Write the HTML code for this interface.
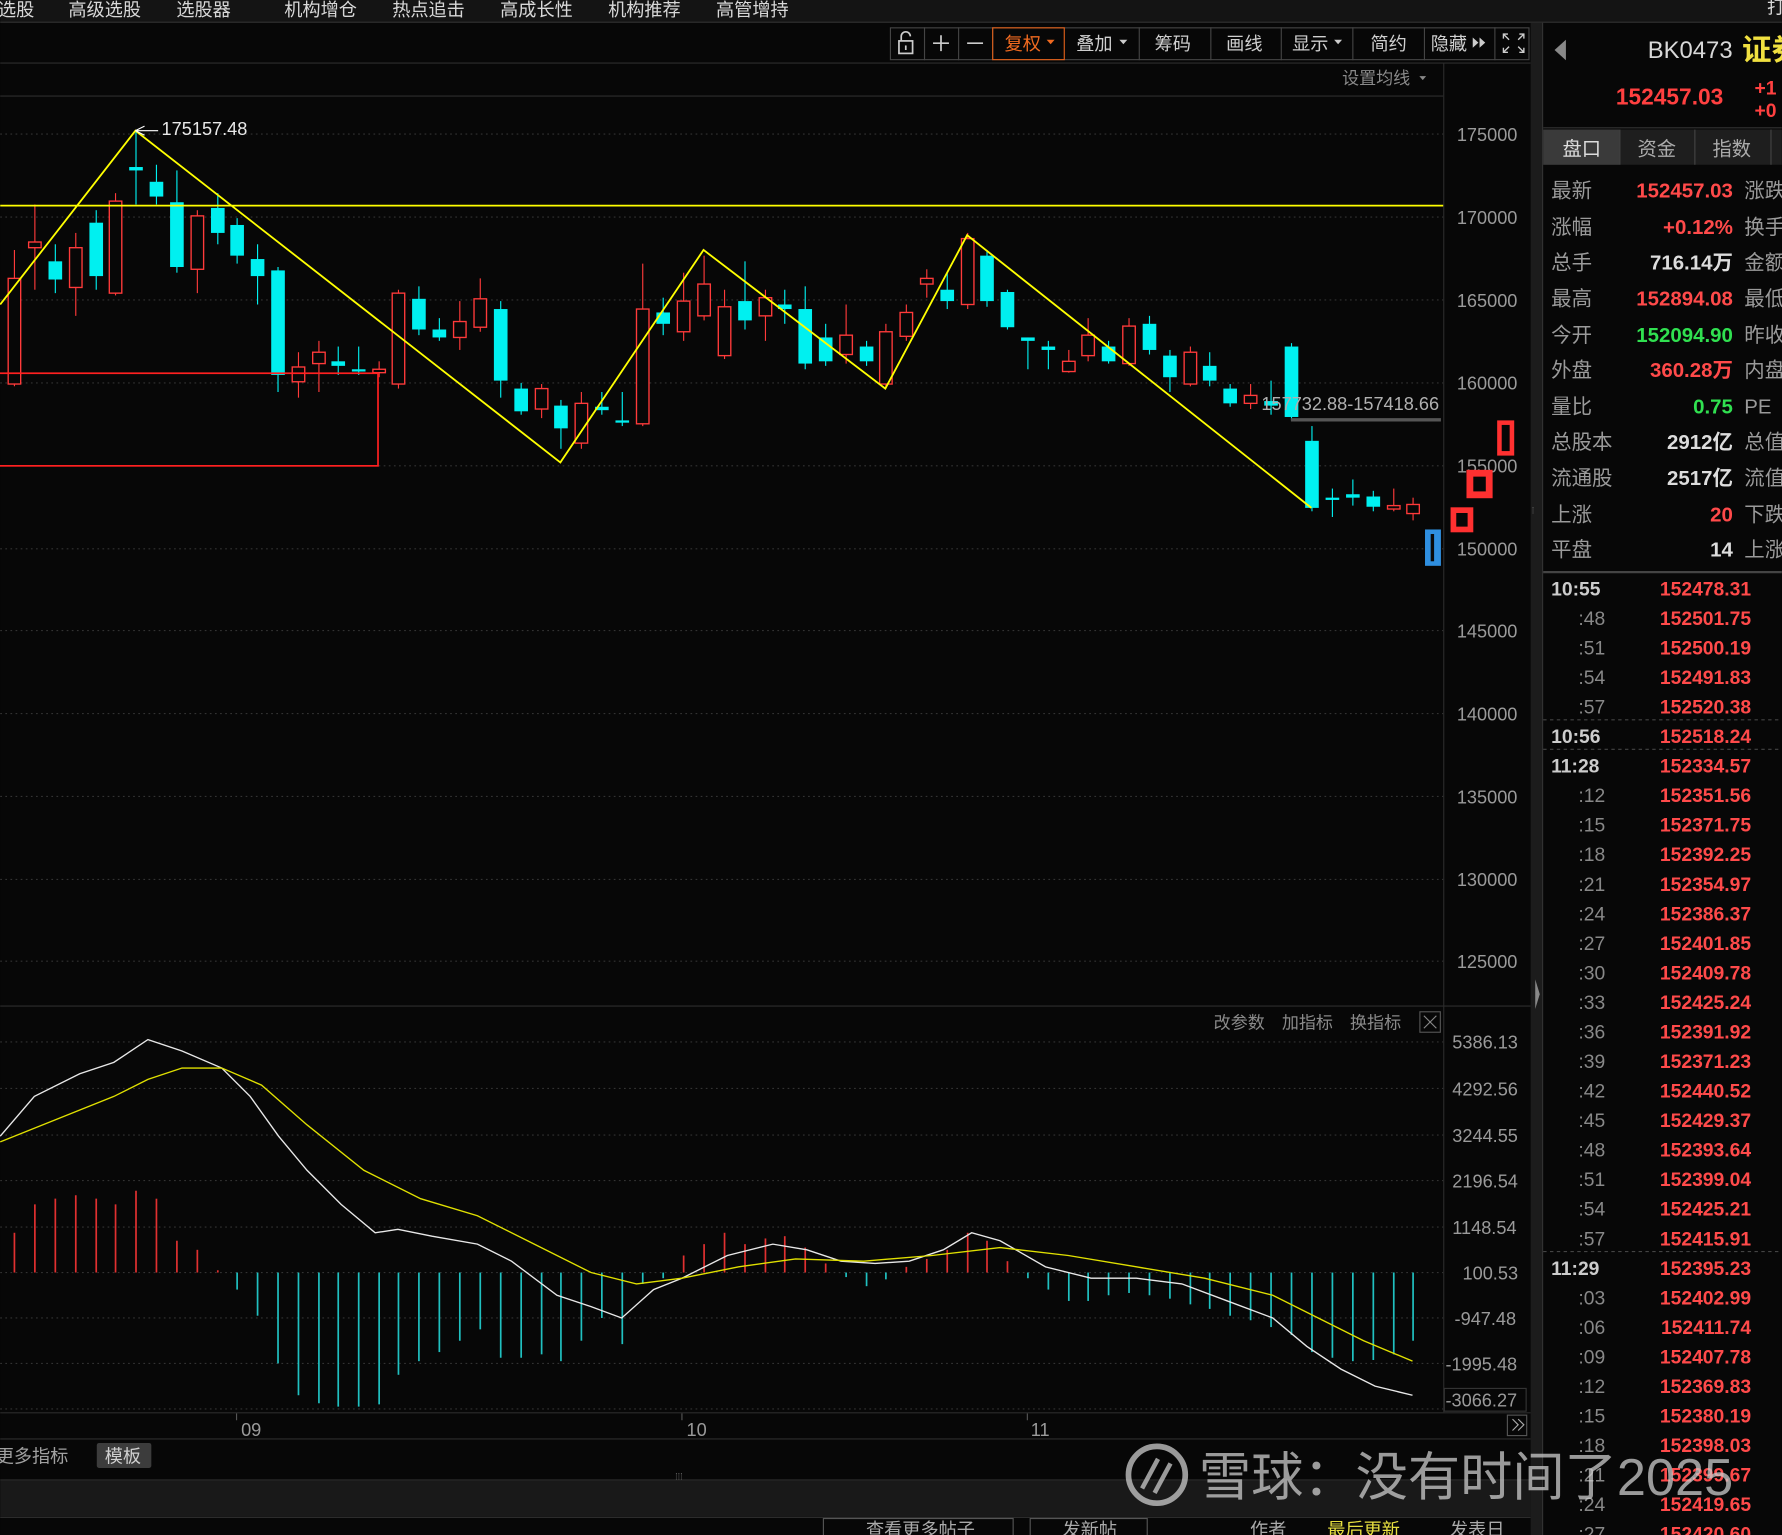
<!DOCTYPE html>
<html><head><meta charset="utf-8"><style>
html,body{margin:0;padding:0;background:#070707;overflow:hidden}
svg{display:block}
text{font-family:"Liberation Sans","Noto Sans CJK SC",sans-serif}
</style></head><body>
<svg id="s" width="1782" height="1535" viewBox="0 0 1568 1351" xmlns="http://www.w3.org/2000/svg">
<rect width="1568" height="1351" fill="#070707"/>
<!-- top menu -->
<rect width="1568" height="19" fill="#141414"/>
<line x1="0" y1="19.5" x2="1568" y2="19.5" stroke="#333"/>
<g fill="#d8d8d8" font-size="16">
<text x="-2" y="14">选股</text><text x="60" y="14">高级选股</text><text x="155" y="14">选股器</text>
<text x="250" y="14">机构增仓</text><text x="345" y="14">热点追击</text><text x="440" y="14">高成长性</text>
<text x="535" y="14">机构推荐</text><text x="630" y="14">高管增持</text><text x="1555" y="12">打</text>
</g>
<!-- chart grid -->
<g stroke="#333" stroke-dasharray="1.5 3" stroke-width="1">
<line x1="0" y1="118" x2="1270" y2="118"/><line x1="0" y1="191" x2="1270" y2="191"/><line x1="0" y1="264" x2="1270" y2="264"/>
<line x1="0" y1="337" x2="1270" y2="337"/><line x1="0" y1="410" x2="1270" y2="410"/><line x1="0" y1="483" x2="1270" y2="483"/>
<line x1="0" y1="555" x2="1270" y2="555"/><line x1="0" y1="628" x2="1270" y2="628"/><line x1="0" y1="701" x2="1270" y2="701"/>
<line x1="0" y1="774" x2="1270" y2="774"/><line x1="0" y1="846" x2="1270" y2="846"/>
<line x1="0" y1="917" x2="1270" y2="917"/><line x1="0" y1="958" x2="1270" y2="958"/><line x1="0" y1="999" x2="1270" y2="999"/>
<line x1="0" y1="1039" x2="1270" y2="1039"/><line x1="0" y1="1080" x2="1270" y2="1080"/><line x1="0" y1="1120" x2="1270" y2="1120"/>
<line x1="0" y1="1160" x2="1270" y2="1160"/><line x1="0" y1="1200" x2="1270" y2="1200"/><line x1="0" y1="1240" x2="1270" y2="1240"/>
</g>
<g stroke="#2c2c2c"><line x1="0" y1="55.5" x2="1347" y2="55.5"/><line x1="0" y1="84.5" x2="1270" y2="84.5"/>
<line x1="1270.5" y1="55" x2="1270.5" y2="1243"/><line x1="0" y1="885.5" x2="1347" y2="885.5"/>
<line x1="0" y1="1243.5" x2="1347" y2="1243.5"/><line x1="0" y1="1266.5" x2="1347" y2="1266.5"/>
<line x1="0" y1="1302.5" x2="1347" y2="1302.5"/><line x1="0" y1="1335.5" x2="1347" y2="1335.5"/></g>
<!-- toolbar -->
<g stroke="#444" fill="none"><rect x="783.5" y="24.5" width="562" height="28"/>
<line x1="813.5" y1="24" x2="813.5" y2="53"/><line x1="843.5" y1="24" x2="843.5" y2="53"/><line x1="873.5" y1="24" x2="873.5" y2="53"/>
<line x1="1002.5" y1="24" x2="1002.5" y2="53"/><line x1="1065.5" y1="24" x2="1065.5" y2="53"/><line x1="1127.5" y1="24" x2="1127.5" y2="53"/>
<line x1="1190.5" y1="24" x2="1190.5" y2="53"/><line x1="1253.5" y1="24" x2="1253.5" y2="53"/><line x1="1315.5" y1="24" x2="1315.5" y2="53"/></g>
<rect x="873.5" y="24.5" width="63" height="28" fill="none" stroke="#e0601a"/>
<g stroke="#ccc" stroke-width="1.5" fill="none"><rect x="791" y="36" width="12" height="11"/><path d="M793 36v-4a4 4 0 0 1 8 0"/><line x1="797" y1="40" x2="797" y2="44"/>
<path d="M828 31v14M821 38h14M851 38h14"/>
<path d="M1323 34v-4h4M1337 30h4v4M1323 42v4h4M1341 42v4h-4M1323 30l5 5M1341 30l-5 5M1323 46l5-5M1341 46l-5-5" stroke-width="1.2"/></g>
<g font-size="16" fill="#cfcfcf"><text x="884" y="44" fill="#f06a20">复权</text><text x="947" y="44">叠加</text><text x="1016" y="44">筹码</text>
<text x="1079" y="44">画线</text><text x="1137" y="44">显示</text><text x="1206" y="44">简约</text><text x="1259" y="44">隐藏</text>
<text x="1181" y="74" fill="#8a8a8a" font-size="15">设置均线</text></g>
<g fill="#ccc"><path d="M921 35h7l-3.5 4z" fill="#f06a20"/><path d="M985 35h7l-3.5 4z"/><path d="M1174 35h7l-3.5 4z"/><path d="M1249 67h6l-3 3.5z" fill="#888"/>
<path d="M1296 33v9l5-4.5zM1302 33v9l5-4.5z"/></g>
<!-- price axis -->
<g font-size="16" fill="#9a9a9a"><text x="1282" y="124">175000</text><text x="1282" y="197">170000</text><text x="1282" y="270">165000</text>
<text x="1282" y="343">160000</text><text x="1282" y="416">155000</text><text x="1282" y="489">150000</text><text x="1282" y="561">145000</text>
<text x="1282" y="634">140000</text><text x="1282" y="707">135000</text><text x="1282" y="780">130000</text><text x="1282" y="852">125000</text>
<text x="1278" y="923">5386.13</text><text x="1278" y="964">4292.56</text><text x="1278" y="1005">3244.55</text><text x="1278" y="1045">2196.54</text>
<text x="1278" y="1086">1148.54</text><text x="1287" y="1126">100.53</text><text x="1280" y="1166">-947.48</text><text x="1272" y="1206">-1995.48</text><text x="1272" y="1238">-3066.27</text></g>
<rect x="1271" y="1222" width="72" height="20" fill="none" stroke="#333"/>
<g id="cd"></g>
<!-- overlays -->
<line x1="0" y1="181" x2="1270" y2="181" stroke="#ffff00" stroke-width="1.5"/>
<rect x="-2" y="328.5" width="334.5" height="81.5" fill="none" stroke="#ff2020" stroke-width="1.5"/>
<polyline points="0,268 119,115 493,407 619,220 779,342 851,207 1154,447" fill="none" stroke="#ffff00" stroke-width="1.6"/>
<path d="M119 115l8-4M119 115l8 4M119 115h20" stroke="#fff" stroke-width="1"/>
<text x="142" y="119" font-size="16" fill="#e8e8e8">175157.48</text>
<line x1="1136" y1="369.5" x2="1268" y2="369.5" stroke="#555" stroke-width="3"/>
<text x="1110" y="361" font-size="16" fill="#b0b0b0">157732.88-157418.66</text>
<rect x="1319.5" y="372" width="11" height="27" fill="none" stroke="#ff3030" stroke-width="4"/>
<rect x="1293.5" y="416.5" width="17" height="19" fill="none" stroke="#ff3030" stroke-width="6"/>
<rect x="1279" y="449" width="15" height="17" fill="none" stroke="#ff3030" stroke-width="5"/>
<rect x="1254" y="466" width="14" height="32" fill="#2f8fe0"/><rect x="1259" y="470" width="3" height="24" fill="#0a0a0a"/>
<!-- MACD -->
<g font-size="15" fill="#8a8a8a"><text x="1068" y="905">改参数</text><text x="1128" y="905">加指标</text><text x="1188" y="905">换指标</text></g>
<rect x="1249.5" y="890.5" width="18" height="18" fill="none" stroke="#555"/><path d="M1253 894l11 11M1264 894l-11 11" stroke="#888"/>
<g id="mb"></g>
<polyline fill="none" stroke="#e8e8e8" stroke-width="1.2" points="0,1000 30,965 70,945 100,935 130,915 160,925 195,940 220,965 245,1000 270,1030 300,1060 330,1085 350,1082 380,1088 420,1095 450,1110 490,1140 520,1150 547,1160 575,1135 600,1125 640,1105 680,1095 710,1100 740,1110 770,1112 800,1110 830,1100 855,1085 880,1092 920,1115 960,1125 1000,1125 1040,1130 1080,1145 1120,1160 1150,1185 1180,1205 1210,1220 1243,1228"/>
<polyline fill="none" stroke="#e0e000" stroke-width="1.2" points="0,1005 50,985 100,965 130,950 160,940 195,940 230,955 270,990 320,1030 370,1055 420,1070 470,1095 520,1120 560,1130 600,1125 650,1115 700,1108 760,1110 820,1105 880,1098 940,1105 1000,1115 1060,1125 1120,1140 1160,1160 1200,1180 1243,1198"/>
<!-- x axis -->
<g stroke="#555"><line x1="208" y1="1244" x2="208" y2="1250"/><line x1="600" y1="1244" x2="600" y2="1250"/><line x1="904" y1="1244" x2="904" y2="1250"/></g>
<g font-size="16" fill="#9a9a9a"><text x="212" y="1264">09</text><text x="604" y="1264">10</text><text x="907" y="1264">11</text></g>
<rect x="1326.5" y="1245.5" width="17" height="18" fill="none" stroke="#555"/><path d="M1331 1249l5 5-5 5M1336 1249l5 5-5 5" stroke="#aaa" fill="none"/>
<text x="-4" y="1287" font-size="16" fill="#a0a0a0">更多指标</text>
<rect x="85" y="1270" width="48" height="22" fill="#3c3c3c" rx="2"/><text x="92" y="1287" font-size="16" fill="#d0d0d0">模板</text>
<rect x="0" y="1303" width="1347" height="32" fill="#191919"/>
<text x="594" y="1302" font-size="8" fill="#666">⁞⁞⁞</text>
<g stroke="#555" fill="none"><rect x="724.5" y="1336.5" width="167" height="20"/><rect x="906.5" y="1336.5" width="103" height="20"/></g>
<g font-size="16" fill="#aaa"><text x="762" y="1352">查看更多帖子</text><text x="935" y="1352">发新帖</text><text x="1100" y="1352">作者</text>
<text x="1168" y="1352" fill="#e8e040">最后更新</text><text x="1276" y="1352">发表日</text></g>
<!-- divider -->
<rect x="1347" y="20" width="10" height="1331" fill="#1c1c1c"/><line x1="1357.5" y1="20" x2="1357.5" y2="1351" stroke="#333"/>
<path d="M1351 862l4 13-4 13z" fill="#888"/><text x="1348" y="452" font-size="8" fill="#666">⁞</text>
<!-- right panel -->
<path d="M1378 35v18l-10-9z" fill="#888"/>
<text x="1450" y="51" font-size="21" fill="#d8d8d8">BK0473</text>
<text x="1533" y="53" font-size="26" font-weight="bold" fill="#f0e040">证券</text>
<text x="1422" y="92" font-size="20" font-weight="bold" fill="#ff4040">152457.03</text>
<text x="1544" y="83" font-size="17" font-weight="bold" fill="#ff4040">+1</text><text x="1544" y="103" font-size="17" font-weight="bold" fill="#ff4040">+0</text>
<line x1="1358" y1="112.5" x2="1568" y2="112.5" stroke="#333"/>
<rect x="1358" y="114" width="210" height="31" fill="#1e1e1e"/><rect x="1358" y="114" width="67" height="31" fill="#3a3a3a"/>
<g stroke="#444"><line x1="1425.5" y1="114" x2="1425.5" y2="145"/><line x1="1491.5" y1="114" x2="1491.5" y2="145"/><line x1="1558.5" y1="114" x2="1558.5" y2="145"/></g>
<g font-size="17" fill="#aaa"><text x="1375" y="137" fill="#ddd">盘口</text><text x="1441" y="137">资金</text><text x="1507" y="137">指数</text></g>
<g font-size="18" fill="#9a9a9a">
<text x="1365" y="174">最新</text><text x="1365" y="206">涨幅</text><text x="1365" y="237">总手</text><text x="1365" y="269">最高</text>
<text x="1365" y="301">今开</text><text x="1365" y="332">外盘</text><text x="1365" y="364">量比</text><text x="1365" y="395">总股本</text>
<text x="1365" y="427">流通股</text><text x="1365" y="459">上涨</text><text x="1365" y="490">平盘</text>
<text x="1535" y="174">涨跌</text><text x="1535" y="206">换手</text><text x="1535" y="237">金额</text><text x="1535" y="269">最低</text>
<text x="1535" y="301">昨收</text><text x="1535" y="332">内盘</text><text x="1535" y="364">PE</text><text x="1535" y="395">总值</text>
<text x="1535" y="427">流值</text><text x="1535" y="459">下跌</text><text x="1535" y="490">上涨</text></g>
<g font-size="18" font-weight="bold" text-anchor="end">
<text x="1525" y="174" fill="#ff4a4a">152457.03</text><text x="1525" y="206" fill="#ff4a4a">+0.12%</text><text x="1525" y="237" fill="#ddd">716.14万</text>
<text x="1525" y="269" fill="#ff4a4a">152894.08</text><text x="1525" y="301" fill="#30e050">152094.90</text><text x="1525" y="332" fill="#ff4a4a">360.28万</text>
<text x="1525" y="364" fill="#30e050">0.75</text><text x="1525" y="395" fill="#ddd">2912亿</text><text x="1525" y="427" fill="#ddd">2517亿</text>
<text x="1525" y="459" fill="#ff4a4a">20</text><text x="1525" y="490" fill="#ddd">14</text></g>
<line x1="1358" y1="503.5" x2="1568" y2="503.5" stroke="#444" stroke-width="2"/>
<g stroke="#444" stroke-dasharray="3 3"><line x1="1358" y1="633.5" x2="1568" y2="633.5"/><line x1="1358" y1="659.5" x2="1568" y2="659.5"/><line x1="1358" y1="1101.5" x2="1568" y2="1101.5"/></g>
<g id="tk" font-size="17"></g>
<!-- watermark -->
<g opacity="0.75"><circle cx="1018" cy="1298" r="25" fill="none" stroke="#ccc" stroke-width="5"/><path d="M1005 1310l14-26M1016 1314l14-26" stroke="#ccc" stroke-width="4"/>
<text x="1055" y="1316" font-size="46" fill="#ccc">雪球：没有时间了2025</text></g>
</svg>
<script>
var NS="http://www.w3.org/2000/svg";
function el(p,t,a){var e=document.createElementNS(NS,t);for(var k in a)e.setAttribute(k,a[k]);p.appendChild(e);return e;}
var C=[[12,245,338,220,340,1],[30,213,218,180,255,1],[48,230,246,215,258,0],[66,218,253,205,278,1],[84,196,243,185,255,0],[101,177,258,170,260,1],[119,147,150,115,180,0],[137,160,173,145,180,0],[155,178,235,150,240,0],[173,190,237,185,258,1],[191,183,205,170,215,0],[208,198,225,192,232,0],[226,228,243,215,268,0],[244,238,330,235,345,0],[262,323,336,310,350,1],[280,310,320,300,345,1],[297,318,322,305,330,0],[315,325,327,305,330,0],[333,325,328,318,332,1],[350,258,338,255,342,1],[368,263,290,252,295,0],[386,290,297,280,300,0],[404,283,297,265,308,1],[422,263,288,245,292,1],[440,272,335,265,350,0],[458,342,362,337,365,0],[476,342,360,338,368,1],[493,357,377,352,395,0],[511,355,390,345,395,1],[529,358,361,345,365,0],[547,370,372,345,375,0],[565,272,373,232,375,1],[583,275,285,262,295,0],[601,265,292,240,300,1],[619,250,278,225,282,1],[637,270,313,255,316,1],[655,265,282,230,290,0],[673,262,278,255,300,1],[690,268,272,255,285,0],[708,272,320,252,325,0],[726,297,318,285,322,0],[744,295,312,268,320,1],[762,305,318,300,322,0],[779,292,338,285,342,1],[797,275,296,268,300,1],[815,245,250,237,262,1],[833,255,265,240,272,0],[851,210,268,205,272,1],[868,225,265,220,270,0],[886,257,288,255,290,0],[904,297,300,297,325,0],[922,305,308,300,325,0],[940,318,327,308,328,1],[957,295,313,280,318,1],[975,305,318,300,320,0],[993,287,320,280,322,1],[1011,285,308,278,312,0],[1029,313,332,308,345,0],[1047,310,338,305,340,1],[1064,322,335,310,340,0],[1082,342,355,338,358,0],[1100,348,355,338,360,1],[1118,353,357,335,365,0],[1136,305,367,302,370,0],[1154,388,447,375,450,0],[1172,438,440,430,455,0],[1190,435,438,422,445,0],[1208,437,446,432,450,0],[1226,445,448,430,450,1],[1243,444,452,438,458,1]];
var g=document.getElementById("cd");
C.forEach(function(c){var col=c[5]?"#ff3a3a":"#00f0f0";
el(g,"line",{x1:c[0]+.5,y1:c[3],x2:c[0]+.5,y2:c[4],stroke:col,"stroke-width":1});
var h=Math.max(c[2]-c[1],1.5);
if(c[5])el(g,"rect",{x:c[0]-5,y:c[1],width:11,height:h,fill:"#070707",stroke:col,"stroke-width":1.2});
else el(g,"rect",{x:c[0]-5.5,y:c[1],width:12,height:h,fill:col});});
var B=[[12,1085],[30,1060],[48,1055],[66,1052],[84,1055],[101,1060],[119,1048],[137,1055],[155,1092],[173,1100],[191,1118],[208,1135],[226,1158],[244,1200],[262,1228],[280,1235],[297,1238],[315,1238],[333,1236],[350,1210],[368,1198],[386,1190],[404,1180],[422,1170],[440,1195],[458,1195],[476,1192],[493,1198],[511,1180],[529,1160],[547,1183],[565,1130],[583,1125],[601,1105],[619,1095],[637,1085],[655,1095],[673,1090],[690,1088],[708,1098],[726,1112],[744,1124],[762,1132],[779,1126],[797,1115],[815,1108],[833,1100],[851,1085],[868,1092],[886,1110],[904,1125],[922,1135],[940,1145],[957,1145],[975,1140],[993,1138],[1011,1140],[1029,1143],[1047,1148],[1064,1152],[1082,1158],[1100,1162],[1118,1168],[1136,1175],[1154,1190],[1172,1195],[1190,1198],[1208,1197],[1226,1192],[1243,1180]];
var m=document.getElementById("mb");
B.forEach(function(b){var up=b[1]<1120;el(m,"line",{x1:b[0]+.5,y1:1120,x2:b[0]+.5,y2:b[1],stroke:up?"#e03030":"#20c0c0","stroke-width":1.5});});
var T=[["10:55","152478.31",1],[":48","152501.75"],[":51","152500.19"],[":54","152491.83"],[":57","152520.38"],["10:56","152518.24",1],["11:28","152334.57",1],[":12","152351.56"],[":15","152371.75"],[":18","152392.25"],[":21","152354.97"],[":24","152386.37"],[":27","152401.85"],[":30","152409.78"],[":33","152425.24"],[":36","152391.92"],[":39","152371.23"],[":42","152440.52"],[":45","152429.37"],[":48","152393.64"],[":51","152399.04"],[":54","152425.21"],[":57","152415.91"],["11:29","152395.23",1],[":03","152402.99"],[":06","152411.74"],[":09","152407.78"],[":12","152369.83"],[":15","152380.19"],[":18","152398.03"],[":21","152399.67"],[":24","152419.65"],[":27","152420.60"]];
var t=document.getElementById("tk");
T.forEach(function(r,i){var y=524+i*26;
var a=el(t,"text",{x:r[2]?1365:1389,y:y,fill:r[2]?"#ccc":"#888","font-weight":r[2]?"bold":"normal"});a.textContent=r[0];
var b=el(t,"text",{x:1541,y:y,fill:"#ff4a4a","font-weight":"bold","text-anchor":"end"});b.textContent=r[1];});
</script>
</body></html>
